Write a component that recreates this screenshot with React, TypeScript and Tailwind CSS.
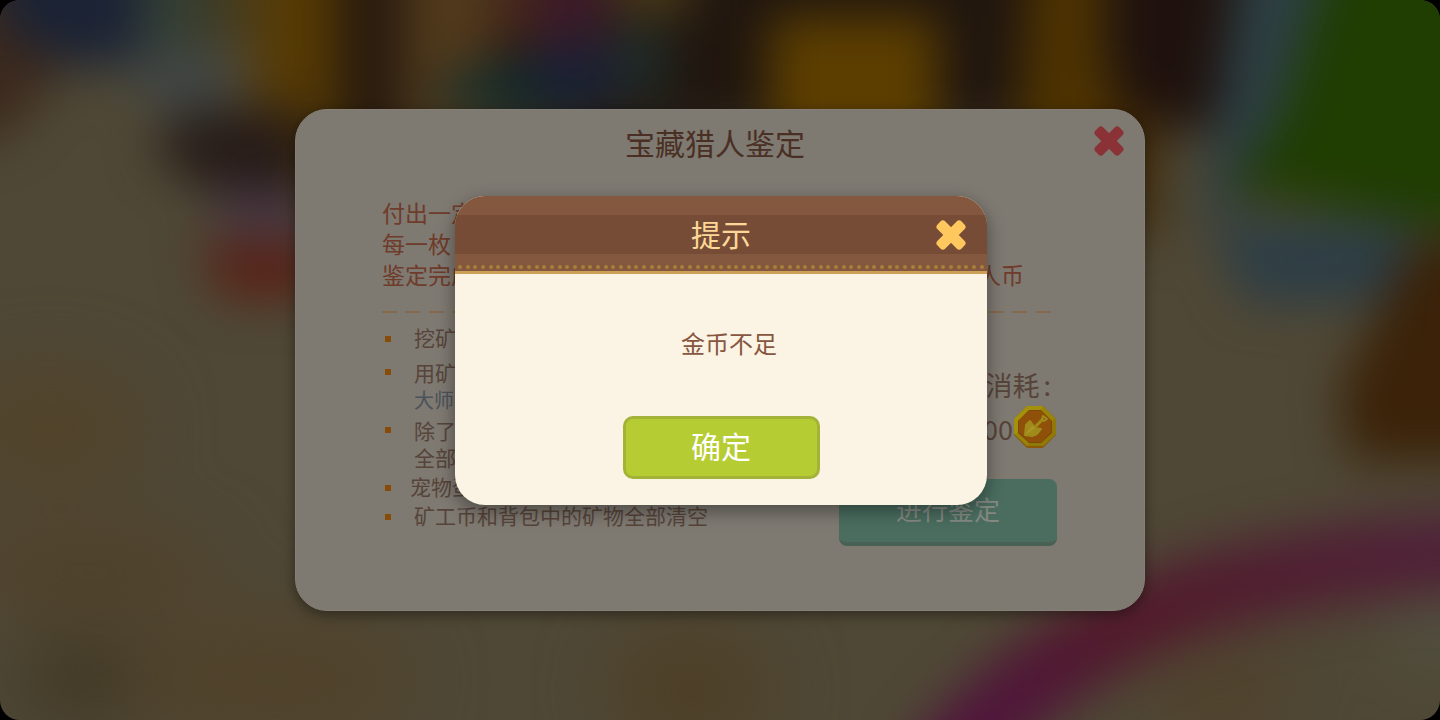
import { useState } from 'react'

const intro = [
  { left: '付出一定', right: '' },
  { left: '每一枚', right: '' },
  { left: '鉴定完成', right: '人币' },
]

const rules = [
  { lines: ['挖矿'], item: 'gap-[23px] pb-2', dot: 'mt-3' },
  { lines: ['用矿', '大师'], item: 'gap-[23px] pb-1', dot: 'mt-2.5' },
  { lines: ['除了', '全部'], item: 'gap-[23px] pb-0.5', dot: 'mt-2.5' },
  { lines: ['宠物蛋'], item: 'gap-[19px] pb-0.5', dot: 'mt-3' },
  { lines: ['矿工币和背包中的矿物全部清空'], item: 'gap-[23px]', dot: 'mt-3' },
]

const stitches = Array.from({ length: 69 }, (_, i) => i)
const dashes = Array.from({ length: 29 }, (_, i) => i)

function CloseIcon() {
  return (
    <svg viewBox="0 0 32 32" className="h-8 w-8" fill="currentColor" aria-hidden="true">
      <rect x="-1" y="10.5" width="34" height="11" rx="3.5" transform="rotate(45 16 16)" />
      <rect x="-1" y="10.5" width="34" height="11" rx="3.5" transform="rotate(-45 16 16)" />
    </svg>
  )
}

function CoinIcon() {
  return (
    <svg viewBox="0 0 44 44" className="h-11 w-11 shrink-0" aria-hidden="true">
      <path d="M14 1h16l13 13v16L30 43H14L1 30V14z" fill="#8a5a0a" />
      <path d="M14 1h16l13 13v15L30 41H14L1 29V14z" fill="#98840a" />
      <path d="M14 1h16l-2 4H16L5 16v12l-4 1V14z" fill="#a3900b" />
      <path d="M43 14v15L30 41H14l2-4h12l11-10V16z" fill="#8f7909" />
      <path d="M16 5h12l11 11v12L28 38H16L5 28V16z" fill="#834609" />
      <path d="M16 6h12l10 10v11L28 37H16L6 27V16z" fill="#8f5009" />
      <path d="M22 22l7-7" stroke="#a08a1c" strokeWidth="3" strokeLinecap="round" />
      <path d="M29 14l1-3 4 3-3 2z" fill="none" stroke="#a08a1c" strokeWidth="2" strokeLinejoin="round" />
      <path
        d="M12 30l1-10 4-4 3 4 2 3 6 1-4 5-5 2z"
        fill="#a08a1c"
        stroke="#a08a1c"
        strokeWidth="2"
        strokeLinejoin="round"
      />
      <path d="M12 30l7-9 3 2z" fill="#ad9826" />
    </svg>
  )
}

// Out-of-focus game scene behind the dialogs
function Scene() {
  return (
    <svg
      viewBox="0 0 1440 720"
      preserveAspectRatio="none"
      className="absolute inset-0 h-full w-full"
      aria-hidden="true"
    >
      <defs>
        <filter id="soft" x="-20%" y="-20%" width="140%" height="140%" colorInterpolationFilters="sRGB">
          <feGaussianBlur stdDeviation="24" />
        </filter>
        <filter id="softer" x="-40%" y="-40%" width="180%" height="180%" colorInterpolationFilters="sRGB">
          <feGaussianBlur stdDeviation="36" />
        </filter>
        <linearGradient id="ribbon" x1="0" y1="1" x2="1" y2="0">
          <stop offset="0" stopColor="#51123c" />
          <stop offset="0.25" stopColor="#50163a" />
          <stop offset="0.5" stopColor="#521a2a" />
          <stop offset="1" stopColor="#4f233a" />
        </linearGradient>
      </defs>
      <rect width="1440" height="720" fill="#4f4836" />
      <g filter="url(#softer)">
        <ellipse cx="50" cy="430" rx="90" ry="60" fill="#52432a" />
        <ellipse cx="90" cy="570" rx="130" ry="40" fill="#50412a" />
        <ellipse cx="80" cy="680" rx="60" ry="40" fill="#3f3622" />
        <ellipse cx="270" cy="680" rx="140" ry="60" fill="#51422a" />
        <ellipse cx="690" cy="690" rx="80" ry="60" fill="#4e3f26" />
        <ellipse cx="1220" cy="690" rx="70" ry="40" fill="#51412b" />
        <ellipse cx="1440" cy="620" rx="40" ry="40" fill="#545547" />
      </g>
      <g filter="url(#soft)">
        <path d="M-60-60H240V30L130 65 70 65 0 140H-60z" fill="#3c291d" />
        <path d="M0-60h140V65H70L0 25z" fill="#1b2335" />
        <rect x="140" y="-60" width="60" height="110" fill="#343f35" />
        <rect x="200" y="-60" width="45" height="100" fill="#403a20" />
        <path d="M130 50h90l20 70-50 15-60-50z" fill="#414644" />
        <rect x="335" y="-60" width="905" height="190" fill="#20160f" />
        <path d="M250-60h88V200h-45l-38-90z" fill="#563a04" />
        <rect x="338" y="-60" width="60" height="260" fill="#26190e" />
        <rect x="402" y="-60" width="90" height="200" fill="#50391b" />
        <rect x="492" y="-60" width="55" height="100" fill="#46271a" />
        <path d="M535-60h75V50h-75z" fill="#3c1a28" />
        <path d="M450 75l90-15 60 50H430z" fill="#14302f" />
        <path d="M525 55l75-18 20 60-70 10z" fill="#192037" />
        <rect x="615" y="30" width="50" height="60" fill="#1f302d" />
        <rect x="615" y="-60" width="75" height="75" fill="#4b3b19" />
        <path d="M560 110h130v60H560z" fill="#28221c" />
        <rect x="770" y="16" width="168" height="160" fill="#5c3e00" />
        <path d="M1032-60h72V60l40 110h-130z" fill="#4e3301" />
        <rect x="1118" y="-60" width="110" height="180" fill="#1f120e" />
        <path d="M1110 110h50l-5 130h-30z" fill="#3f2705" />
        <path d="M150 150l40-40h120v80l-90 10z" fill="#271c18" />
        <path d="M210 190h100v45h-85z" fill="#483a48" />
        <path d="M200 240h120v58h-100z" fill="#582217" />
        <path d="M1244-60h150L1290 180l-90 40z" fill="#2d3f44" />
        <path d="M1335-60h200V245L1230 190l50-70z" fill="#203d02" />
        <path d="M1210 222h210l-30 80h-145z" fill="#2d3e46" />
        <path d="M1415 240h105v220h-170l-10-70z" fill="#3b2208" />
        <path
          d="M935 780C1030 658 1150 605 1240 584S1400 551 1520 551"
          fill="none"
          stroke="url(#ribbon)"
          strokeWidth="80"
        />
      </g>
    </svg>
  )
}

function AppraisalPanel() {
  return (
    <section className="relative w-[850px] max-w-full rounded-[32px] border border-[#858077] bg-[#7e7971] pt-3 pb-16 shadow-[0_4px_14px_rgba(0,0,0,0.4)]">
      <h1 className="pr-2.5 text-center text-[30px] leading-10 text-[#4a3024]">宝藏猎人鉴定</h1>
      <button type="button" aria-label="关闭" className="absolute top-[15px] right-[19px] text-[#8b3236]">
        <CloseIcon />
      </button>

      <div className="pr-[87px] pl-[86px] pt-[35px]">
        <div className="pr-[33px] text-[23px] leading-[31px] text-[#6f3b2a]">
          {intro.map((row) => (
            <p key={row.left} className="flex justify-between">
              <span>{row.left}</span>
              <span>{row.right}</span>
            </p>
          ))}
        </div>

        <div className="mt-[21px] mr-1.5 flex justify-between">
          {dashes.map((i) => (
            <span key={i} className="h-0.5 w-[15px] bg-[#84694d]" />
          ))}
        </div>

        <div className="flex justify-between pt-[11px]">
          <ul className="text-[21px] leading-[27px] text-[#56443a]">
            {rules.map((rule) => (
              <li key={rule.lines[0]} className={`flex pl-[3px] ${rule.item}`}>
                <span className={`h-1.5 w-1.5 shrink-0 bg-[#874c08] ${rule.dot}`} />
                <div>
                  {rule.lines.map((line) => (
                    <p key={line} className={line === '大师' ? 'text-[20px] text-[#4b525a]' : ''}>
                      {line}
                    </p>
                  ))}
                </div>
              </li>
            ))}
          </ul>

          <div className="flex w-[218px] flex-col items-end pt-[43px] text-[27px] leading-9 text-[#56443a]">
            <p className="flex gap-1 pr-1.5">
              <span>消耗</span>
              <span>:</span>
            </p>
            <p className="flex items-center pt-0.5">
              <span className="pt-1">00</span>
              <CoinIcon />
            </p>
            <button
              type="button"
              className="mt-[30px] h-[67px] w-full rounded-lg border-b-4 border-[#486154] bg-[#4a6d60] pb-1 text-[26px] text-[#848982]"
            >
              进行鉴定
            </button>
          </div>
        </div>
      </div>
    </section>
  )
}

function NoticeDialog({ onClose }: { onClose: () => void }) {
  return (
    <div className="absolute inset-0 flex items-center justify-center pb-5 pl-0.5">
      <div
        role="dialog"
        aria-labelledby="notice-title"
        className="w-[532px] max-w-full overflow-hidden rounded-[30px] bg-[#fbf3e3] shadow-[0_6px_18px_rgba(0,0,0,0.4)]"
      >
        <header className="border-b-[3px] border-[#cb9f58] bg-[#83583f] pt-[19px]">
          <div className="relative h-[39px] bg-[#774c36]">
            <h2 id="notice-title" className="text-center text-[30px] leading-9 text-[#fdd798]">
              提示
            </h2>
            <button
              type="button"
              aria-label="关闭"
              onClick={onClose}
              className="absolute top-1 right-5 text-[#ffc85f]"
            >
              <CloseIcon />
            </button>
          </div>
          <div className="flex justify-between px-[3px] pt-[11px] pb-0.5">
            {stitches.map((i) => (
              <span key={i} className="h-1 w-1 rounded-full bg-[#a8803a]" />
            ))}
          </div>
        </header>
        <div className="flex flex-col items-center px-8 pt-[51px] pb-[26px]">
          <p className="pl-4 text-2xl leading-9 text-[#875640]">金币不足</p>
          <button
            type="button"
            onClick={onClose}
            className="mt-[55px] h-[63px] w-[197px] rounded-[10px] border-[3px] border-[#a2b337] bg-[#b6cc33] pb-1 text-[30px] leading-none text-white"
          >
            确定
          </button>
        </div>
      </div>
    </div>
  )
}

export default function App() {
  const [open, setOpen] = useState(true)

  return (
    <div className="min-h-screen bg-black font-['Noto_Sans_CJK_SC',sans-serif]">
      <main className="relative flex min-h-screen items-center justify-center overflow-hidden rounded-[20px]">
        <Scene />
        <AppraisalPanel />
        {open && <NoticeDialog onClose={() => setOpen(false)} />}
      </main>
    </div>
  )
}
